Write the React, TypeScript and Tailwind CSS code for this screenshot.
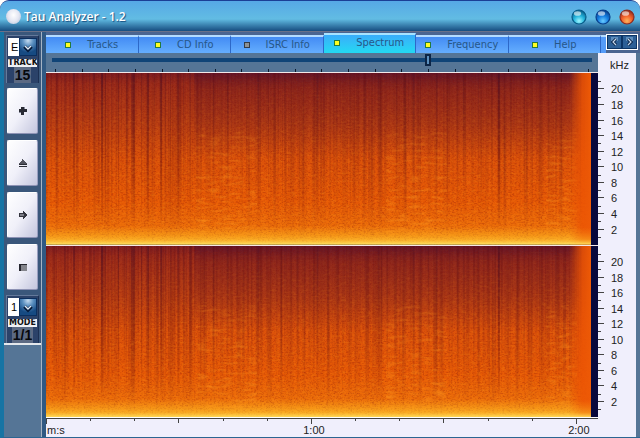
import { useState } from "react"
import type { ReactNode } from "react"
import clsx from "clsx"

interface Tab {
  name: string
  enabled: boolean
}

const tabs: Tab[] = [
  { name: "Tracks", enabled: true },
  { name: "CD Info", enabled: true },
  { name: "ISRC Info", enabled: false },
  { name: "Spectrum", enabled: true },
  { name: "Frequency", enabled: true },
  { name: "Help", enabled: true },
]

const frequencies = [20, 18, 16, 14, 12, 10, 8, 6, 4, 2]

// One cell per ten seconds
const timeCells = Array.from({ length: 13 }, (_, i) => i)

// [x, width, opacity] of the quiet columns
const quietColumns = [
  [10, 1, 0.2], [18, 2, 0.25], [27, 2, 0.55], [36, 1, 0.3], [43, 1, 0.2], [47, 2, 0.3], [55, 2, 0.7],
  [59, 1, 0.4], [65, 1, 0.25], [72, 1, 0.5], [80, 1, 0.3], [85, 4, 0.5], [95, 1, 0.4], [101, 2, 0.55],
  [108, 1, 0.25], [114, 2, 0.6], [119, 1, 0.3], [124, 1, 0.35], [131, 2, 0.5], [137, 1, 0.3], [143, 2, 0.35],
  [154, 1, 0.15], [167, 1, 0.2], [181, 1, 0.4], [194, 1, 0.2], [211, 2, 0.45], [224, 1, 0.2], [238, 1, 0.3],
  [251, 1, 0.25], [270, 2, 0.45], [277, 1, 0.2], [289, 1, 0.2], [303, 1, 0.25], [318, 2, 0.2], [331, 2, 0.35],
  [349, 1, 0.25], [358, 1, 0.3], [366, 2, 0.45], [373, 1, 0.3], [381, 1, 0.2], [389, 2, 0.3], [402, 1, 0.25],
  [416, 1, 0.2], [431, 1, 0.3], [451, 2, 0.75], [463, 1, 0.2], [477, 1, 0.3], [492, 1, 0.25], [508, 2, 0.25],
]

// [x, width] of the stretches where the harmonics ripple
const ripples = [[150, 60], [340, 60], [500, 30]]

function Spectrogram({ id, seed, label }: { id: string; seed: number; label: string }) {
  return (
    <div className="flex min-h-0 flex-1 border-t border-[#f4e8e8] bg-[#08083c] pr-[7px]">
      <svg
        role="img"
        aria-label={label}
        viewBox="0 0 544 172"
        preserveAspectRatio="none"
        className="block h-full min-h-0 w-full"
      >
        <defs>
          <linearGradient id={`${id}-level`} x1="0" y1="0" x2="0" y2="1">
            <stop offset="0" stopColor="#8a2220" />
            <stop offset="0.06" stopColor="#a5301a" />
            <stop offset="0.3" stopColor="#c24312" />
            <stop offset="0.5" stopColor="#dc520a" />
            <stop offset="0.75" stopColor="#e85b06" />
            <stop offset="0.89" stopColor="#ed6e0a" />
            <stop offset="0.95" stopColor="#f69416" />
            <stop offset="1" stopColor="#ffd84c" />
          </linearGradient>
          <linearGradient id={`${id}-quiet`} x1="0" y1="0" x2="0" y2="1">
            <stop offset="0" stopColor="#4a0d22" stopOpacity="0.9" />
            <stop offset="0.5" stopColor="#6a1210" stopOpacity="0.7" />
            <stop offset="0.8" stopColor="#8a2008" stopOpacity="0.35" />
            <stop offset="0.9" stopColor="#8a2008" stopOpacity="0" />
          </linearGradient>
          <linearGradient id={`${id}-top`} x1="0" y1="0" x2="0" y2="1">
            <stop offset="0" stopColor="#400b32" stopOpacity="0.6" />
            <stop offset="0.1" stopColor="#551025" stopOpacity="0.35" />
            <stop offset="0.3" stopColor="#551025" stopOpacity="0.22" />
            <stop offset="0.5" stopColor="#551025" stopOpacity="0" />
          </linearGradient>
          <linearGradient id={`${id}-fade`}>
            <stop offset="0" stopColor="#ec5404" stopOpacity="0" />
            <stop offset="0.6" stopColor="#ec5404" stopOpacity="0.85" />
            <stop offset="1" stopColor="#ee5a06" />
          </linearGradient>
          <linearGradient id={`${id}-floor`} x1="0" y1="0" x2="0" y2="1">
            <stop offset="0.9" stopColor="#f58a10" stopOpacity="0" />
            <stop offset="0.97" stopColor="#fbaa20" stopOpacity="0.6" />
            <stop offset="1" stopColor="#ffe060" />
          </linearGradient>
          <linearGradient id={`${id}-high`} x1="0" y1="0" x2="0" y2="1">
            <stop offset="0" stopColor="#fff" />
            <stop offset="0.5" stopColor="#fff" stopOpacity="0.75" />
            <stop offset="0.9" stopColor="#fff" stopOpacity="0.1" />
          </linearGradient>
          <linearGradient id={`${id}-low`} x1="0" y1="0" x2="0" y2="1">
            <stop offset="0" stopColor="#fff" stopOpacity="0.1" />
            <stop offset="0.5" stopColor="#fff" stopOpacity="0.6" />
            <stop offset="1" stopColor="#fff" />
          </linearGradient>
          <mask id={`${id}-high-mask`}>
            <rect width="544" height="172" fill={`url(#${id}-high)`} />
          </mask>
          <mask id={`${id}-low-mask`}>
            <rect width="544" height="172" fill={`url(#${id}-low)`} />
          </mask>
          <filter id={`${id}-columns`} x="0" y="0" width="1" height="1" colorInterpolationFilters="sRGB">
            <feTurbulence type="fractalNoise" baseFrequency="0.3 0.002" numOctaves="2" seed={seed} />
            <feColorMatrix values="0 0 0 0 0.35  0 0 0 0 0.04  0 0 0 0 0.08  2.6 0 0 0 -1.15" />
          </filter>
          <filter id={`${id}-grain`} x="0" y="0" width="1" height="1" colorInterpolationFilters="sRGB">
            <feTurbulence type="fractalNoise" baseFrequency="0.5 0.65" numOctaves="2" seed={seed + 3} />
            <feColorMatrix values="0 0 0 0 0.5  0 0 0 0 0.06  0 0 0 0 0.04  2.4 0 0 0 -1.1" />
          </filter>
          <filter id={`${id}-sparks`} x="0" y="0" width="1" height="1" colorInterpolationFilters="sRGB">
            <feTurbulence type="fractalNoise" baseFrequency="0.2 0.5" numOctaves="2" seed={seed + 7} />
            <feColorMatrix values="0 0 0 0 1  0 0 0 0 0.58  0 0 0 0 0.1  0 2.6 0 0 -1.2" />
          </filter>
          <filter id={`${id}-ripple`} x="0" y="0" width="1" height="1" colorInterpolationFilters="sRGB">
            <feTurbulence type="fractalNoise" baseFrequency="0.08 0.3" numOctaves="1" seed={seed + 9} />
            <feColorMatrix values="0 0 0 0 1  0 0 0 0 0.6  0 0 0 0 0.12  0 3.4 0 0 -1.7" />
          </filter>
        </defs>
        <rect width="544" height="172" fill={`url(#${id}-level)`} />
        <rect width="148" height="172" fill={`url(#${id}-top)`} opacity="0.25" />
        <rect x="148" width="396" height="172" fill={`url(#${id}-top)`} opacity="0.85" />
        <g mask={`url(#${id}-high-mask)`}>
          <rect width="544" height="172" filter={`url(#${id}-columns)`} opacity="0.5" />
        </g>
        {quietColumns.map(([x, width, opacity]) => (
          <rect key={x} x={x} width={width} height="172" fill={`url(#${id}-quiet)`} opacity={opacity} />
        ))}
        <rect width="544" height="172" filter={`url(#${id}-grain)`} opacity="0.35" />
        <g mask={`url(#${id}-low-mask)`}>
          <rect width="544" height="172" filter={`url(#${id}-sparks)`} opacity="0.35" />
          {ripples.map(([x, width]) => (
            <rect key={x} x={x} y="60" width={width} height="104" filter={`url(#${id}-ripple)`} opacity="0.5" />
          ))}
        </g>
        <rect x="522" width="22" height="172" fill={`url(#${id}-fade)`} />
        <rect width="544" height="172" fill={`url(#${id}-floor)`} />
      </svg>
    </div>
  )
}

function FrequencyScale() {
  return (
    <div className="flex min-h-0 flex-1 flex-col pt-px text-[11px] leading-none text-[#222]">
      <div className="min-h-0 flex-[1.05]" />
      {frequencies.map((freq) => (
        <div key={freq} className="relative flex min-h-0 flex-2 items-center">
          <span className="absolute top-0 left-0 h-px w-[3px] bg-[#444]" />
          <span className="h-px w-[6px] bg-[#444]" />
          <span className="ml-[7px] pt-[2px]">{freq}</span>
        </div>
      ))}
      <div className="min-h-0 flex-1">
        <div className="h-px w-[3px] bg-[#444]" />
      </div>
    </div>
  )
}

interface PickBoxProps {
  label: string
  caption: string
  value: string
  readout: string
}

function PickBox({ label, caption, value, readout }: PickBoxProps) {
  return (
    <div className="flex flex-col items-center border-t border-r border-l border-t-[#64799a] border-r-[#1c3053] border-l-[#64799a] bg-[#2b4269] px-px pt-[2px]">
      <div className="relative h-[18px] w-full">
        <select
          aria-label={label}
          className="block h-full w-full appearance-none bg-white pl-[3px] text-[11px] leading-[18px] text-black outline-none"
        >
          <option>{value}</option>
        </select>
        <svg viewBox="0 0 18 18" className="pointer-events-none absolute top-0 right-0 size-[18px]">
          <defs>
            <radialGradient id={`${caption}-shine`} cx="0.5" cy="0.1" r="0.75">
              <stop offset="0" stopColor="#c4daef" />
              <stop offset="0.45" stopColor="#5a8fc0" />
              <stop offset="1" stopColor="#164a82" />
            </radialGradient>
          </defs>
          <rect width="18" height="18" fill="#0b2f5f" />
          <rect x="1" y="1" width="16" height="16" fill={`url(#${caption}-shine)`} />
          <path d="M5.500 8.500L9 12l3.500-3.500" fill="none" stroke="#061c3c" strokeWidth="3.600" />
          <path d="M6 8l3 3 3-3" fill="none" stroke="#e2edf8" strokeWidth="1.400" />
        </svg>
      </div>
      <div className="mt-[3px] h-2 w-[29px] overflow-hidden bg-[#eef0f4] text-center font-['DejaVu_Sans'] text-[8px] leading-[8px] font-bold text-[#111]">
        {caption}
      </div>
      <output className="text-center text-[14px] leading-4 font-bold text-[#06080c]">
        <span className="bg-[#5c6a83] px-px">{readout}</span>
      </output>
    </div>
  )
}

function SideButton({ label, children }: { label: string; children: ReactNode }) {
  return (
    <button
      type="button"
      aria-label={label}
      className="mx-px flex h-[46px] items-center justify-center rounded-[2px] border border-t-white border-r-[#9a9fc0] border-b-[#8d92b4] border-l-white bg-linear-to-br from-white via-[#f0f0f9] to-[#c4c6de]"
    >
      <svg viewBox="0 0 10 10" className="size-[10px]" shapeRendering="crispEdges">
        {children}
      </svg>
    </button>
  )
}

function WindowButton({ id, label, colors }: { id: string; label: string; colors: string[] }) {
  return (
    <button type="button" aria-label={label} className="size-4">
      <svg viewBox="0 0 16 16" className="size-4">
        <defs>
          <radialGradient id={id} cx="0.5" cy="0.78" r="0.75">
            <stop offset="0" stopColor={colors[0]} />
            <stop offset="0.5" stopColor={colors[1]} />
            <stop offset="1" stopColor={colors[2]} />
          </radialGradient>
        </defs>
        <circle cx="8" cy="8" r="7" fill={`url(#${id})`} stroke={colors[2]} strokeWidth="1.200" />
        <ellipse cx="6.500" cy="4.500" rx="3.600" ry="2.300" fill="#fff" opacity="0.6" />
      </svg>
    </button>
  )
}

export default function App() {
  const [activeTab, setActiveTab] = useState("Spectrum")
  const [position, setPosition] = useState(698)

  return (
    <div className="flex h-screen min-h-[400px] flex-col overflow-hidden rounded-t-[9px] border-t border-[#1b3f96] bg-[#557596] font-['Liberation_Sans',sans-serif]">
      <header className="flex h-[31px] shrink-0 items-center rounded-t-[8px] border-b border-[#6a7088] bg-linear-to-b from-[#56a8e6] via-[#62bce3] via-60% to-[#174d80] pt-px pr-[5px] pl-[6px]">
        <span className="size-[15px] rounded-full bg-radial-[at_50%_40%] from-white via-[#e4e6f2] to-[#a8bbd6]" />
        <h1 className="ml-[3px] flex-1 font-['Open_Sans'] text-[12px] font-semibold text-white [text-shadow:1px_1px_1px_#174f80]">
          Tau Analyzer - 1.2
        </h1>
        <div className="flex gap-2">
          <WindowButton id="minimize" label="Minimize" colors={["#9ef6ff", "#23b4dc", "#075c89"]} />
          <WindowButton id="maximize" label="Maximize" colors={["#6acbff", "#147de0", "#083f8c"]} />
          <WindowButton id="close" label="Close" colors={["#ffb45c", "#f3602a", "#8c2c20"]} />
        </div>
      </header>

      <div className="flex min-h-0 flex-1 border-b border-l-4 border-b-[#2b6592] border-l-[#1674a4]">
        <aside className="w-[38px] shrink-0 border-r border-[#a5b3c3] bg-[#557596]">
          <div className="border-b-2 border-[#e4e8ec] bg-[#3a577b] px-[2px] pt-[3px]">
            <PickBox label="Drive" caption="TRACK" value="E" readout="15" />
            <div className="my-[5px] flex flex-col gap-[6px]">
              <SideButton label="Add">
                <path d="M3 1h3v2h3v3H6v3H3V6H1V3h2z" fill="#282a33" />
                <path d="M6 1h1v2H6zM1 6h2v1H1z" fill="#85889a" />
              </SideButton>
              <SideButton label="Eject">
                <path d="M4 1h1v1h1v1h1v1h1v1h1v1H1V5h1V4h1V3h1z" fill="#54555f" />
                <path d="M1 6h8v1H1zM1 8h8v1H1z" fill="#2c2d35" />
              </SideButton>
              <SideButton label="Next">
                <path d="M1 3h4V1h1v1h1v1h1v1h1v2H8v1H7v1H6v1H5V7H1z" fill="#34353e" />
                <path d="M2 4h4v2H2z" fill="#7b7c86" />
              </SideButton>
              <SideButton label="Stop">
                <path d="M1 2h8v7H1z" fill="#84858c" />
                <path d="M1 2h8v1H3v6H1z" fill="#26272f" />
              </SideButton>
            </div>
            <PickBox label="Scale" caption="MODE" value="1" readout="1/1" />
          </div>
        </aside>

        <main className="flex min-w-0 flex-1 flex-col border-l-4 border-[#305983]">
          <nav className="flex h-[21px] shrink-0 items-end bg-[#4b6591] pt-px pr-[2px]">
            {tabs.map((tab) => (
              <button
                key={tab.name}
                type="button"
                onClick={() => setActiveTab(tab.name)}
                className={clsx(
                  "flex flex-1 items-center justify-center gap-4 border-t-2 border-r border-r-[#2d68c8] font-['DejaVu_Sans_Condensed','DejaVu_Sans'] text-[11px] font-stretch-condensed text-[#275788]",
                  tab.name === activeTab
                    ? "h-[20px] border-t-[#a7e3ff] bg-linear-to-b from-[#39adfa] to-[#22d9f2] pb-[2px]"
                    : "h-[18px] border-t-[#b4dbff] bg-linear-to-b from-[#438bf4] to-[#65aefe]",
                )}
              >
                <span
                  className={clsx(
                    "size-[6px] shrink-0 border",
                    tab.enabled ? "border-[#267a3c] bg-[#ffff21]" : "border-[#333b48] bg-[#8e9294]",
                  )}
                />
                <span className="whitespace-nowrap">{tab.name}</span>
              </button>
            ))}
            <span className="h-[18px] w-[5px] border-t-2 border-[#b4dbff] bg-[#559cf9]" />
            <div className="mb-[3px] flex h-4 shrink-0 border border-white bg-[#0c3464]">
              {["M9 4L6 7l3 3", "M6 4l3 3-3 3"].map((d, i) => (
                <button key={d} type="button" aria-label={i === 0 ? "Previous tab" : "Next tab"}>
                  <svg viewBox="0 0 15 14" className="h-[14px] w-[15px]">
                    <rect x="1" y="1" width="13" height="12" fill="#2c5f96" />
                    <rect x="4" y="2" width="7" height="4" fill="#5e8dbc" />
                    <path d={d} fill="none" stroke="#061f42" strokeWidth="3" />
                    <path d={d} fill="none" stroke="#c5d9ed" strokeWidth="1.200" />
                  </svg>
                </button>
              ))}
            </div>
          </nav>

          <div className="flex min-h-0 flex-1">
            <div className="flex min-w-0 flex-1 flex-col">
              <div className="flex h-[19px] shrink-0 flex-col justify-between bg-[#557596]">
                <input
                  type="range"
                  aria-label="Position"
                  min={0}
                  max={1000}
                  value={position}
                  onChange={(e) => setPosition(Number(e.target.value))}
                  className="mx-[6px] mt-px h-3 appearance-none bg-transparent [&::-webkit-slider-runnable-track]:h-1 [&::-webkit-slider-runnable-track]:bg-[#104477] [&::-webkit-slider-thumb]:-mt-1 [&::-webkit-slider-thumb]:h-3 [&::-webkit-slider-thumb]:w-[6px] [&::-webkit-slider-thumb]:appearance-none [&::-webkit-slider-thumb]:border-2 [&::-webkit-slider-thumb]:border-[#0c2546] [&::-webkit-slider-thumb]:bg-[#5b8fbd]"
                />
                <div className="flex justify-between px-[9px]">
                  {Array.from({ length: 21 }, (_, i) => (
                    <span key={i} className="h-[3px] w-px bg-[#0c1a2c]" />
                  ))}
                </div>
              </div>
              <div className="flex min-h-0 flex-1 flex-col">
                <Spectrogram id="left" seed={4} label="Left channel" />
                <Spectrogram id="right" seed={11} label="Right channel" />
              </div>
              <div className="flex h-5 shrink-0 overflow-hidden border-t border-white bg-[#f0effc] text-[11px] text-[#222]">
                {timeCells.map((cell) => (
                  <div key={cell} className="w-[8%] shrink-0 border-t border-[#444]">
                    <div
                      className={clsx(
                        "w-px bg-[#444]",
                        cell % 6 === 0 ? "h-[5px]" : cell % 3 === 0 ? "h-1" : "h-[2px]",
                      )}
                    />
                    {cell === 0 && <div className="pl-px leading-[12px]">m:s</div>}
                    {cell > 0 && cell % 6 === 0 && (
                      <div className="ml-[3px] w-max -translate-x-1/2 leading-[12px]">{`${cell / 6}:00`}</div>
                    )}
                  </div>
                ))}
              </div>
            </div>
            <div className="mr-1 flex w-[38px] shrink-0 flex-col bg-[#f0effc]">
              <div className="h-[19px] shrink-0 pt-[4px] pl-3 text-[11px] leading-[16px] text-[#222]">kHz</div>
              <div className="flex min-h-0 flex-1 flex-col">
                <FrequencyScale />
                <FrequencyScale />
              </div>
              <div className="h-5 shrink-0" />
            </div>
          </div>
        </main>
      </div>
    </div>
  )
}
